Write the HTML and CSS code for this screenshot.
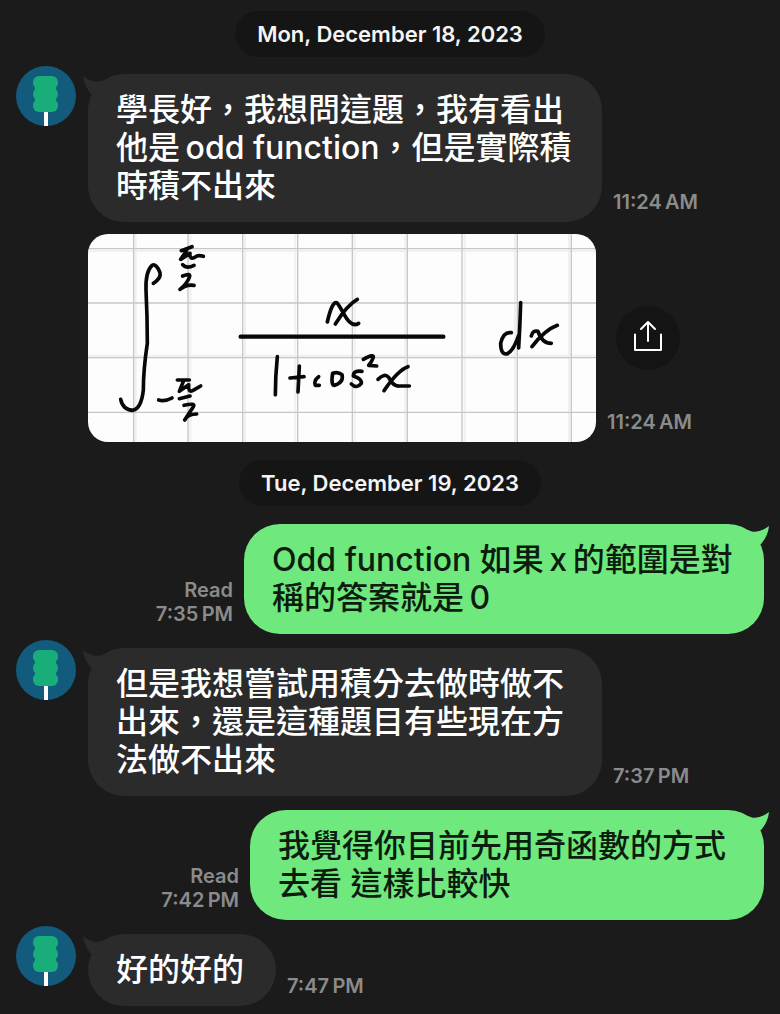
FILE: index.html
```html
<!DOCTYPE html>
<html lang="zh-Hant">
<head>
<meta charset="utf-8">
<meta name="viewport" content="width=device-width, initial-scale=1">
<title>Chat</title>
<link rel="stylesheet" href="styles.css">
</head>
<body>
<svg class="defs" aria-hidden="true">
  <symbol id="avatar" viewBox="0 0 60 60">
    <circle cx="30" cy="30" r="30" fill="#125b7d"/>
    <path d="M28 45h4v15h-4z" fill="#fff"/>
    <g fill="#18ad79">
      <rect x="17" y="10" width="25" height="13" rx="6"/>
      <rect x="17" y="21" width="25" height="14" rx="7"/>
      <rect x="17" y="33" width="25" height="13" rx="6"/>
      <rect x="19" y="15" width="21" height="26"/>
    </g>
  </symbol>
  <symbol id="tail-right" viewBox="0 0 30 30"><path d="M8 6L12 7.500Q20 9 29 2Q28 12 21 20L10 26Z"/></symbol>
  <symbol id="tail-left" viewBox="0 0 30 30"><path d="M22 6L18 7.500Q10 9 1 2Q2 12 9 20L20 26Z"/></symbol>
</svg>
<main class="chat">
  <time class="date" datetime="2023-12-18">Mon, December 18, 2023</time>

  <article class="row received">
    <svg class="avatar" role="img" aria-label="Profile"><use href="#avatar"/></svg>
    <div class="bubble"><svg class="tail" aria-hidden="true"><use href="#tail-left"/></svg>學長好，我想問這題，我有看出他是&#8201;odd function，但是實際積時積不出來</div>
    <div class="meta"><time>11:24&#8201;AM</time></div>
  </article>

  <article class="row photo-row">
    <svg class="photo" viewBox="0 12 1524 624" role="img" aria-label="Handwritten integral of x over 1 plus cos squared x">
      <path fill="#fdfdfd" d="M0 12h1524v624H0z"/>
      <path stroke="#f0f0f0" stroke-width="6" d="M143 12v624M307 12v624M471 12v624M622 12v624M800 12v624M952 12v624M1130 12v624M1281 12v624M1443 12v624M0 63h1524M0 377h1524"/>
      <path stroke="#c6c6c6" stroke-width="4" d="M137 12v624M300 12v624M464 12v624M629 12v624M793 12v624M958 12v624M1122 12v624M1288 12v624M1450 12v624M0 56h1524M0 219h1524M0 383h1524M0 547h1524"/>
      <g class="ink">
        <path d="M196 160Q220 145 216 128Q205 100 192 106Q172 125 174 180Q178 260 178 340Q166 420 166 480Q160 535 135 541Q105 540 98 508"/>
        <path d="M280 62L312 50M296 62L278 88L306 70Q304 90 320 82Q330 74 346 79M284 104Q296 118 318 106M284 138Q310 128 304 142Q296 162 276 178Q295 162 318 166"/>
        <path d="M212 510Q230 516 252 504M268 450L304 450M286 454L274 484L302 464Q300 488 314 482L338 468M274 506L306 498M288 526Q324 518 316 530L290 570Q300 552 326 552"/>
        <path d="M458 320H1066" stroke-width="13"/>
        <path d="M568 380Q562 440 562 494M606 444L648 440M634 408L630 486M692 440Q676 452 682 466L694 466M734 430Q728 466 740 466Q768 456 762 434Q750 424 734 430M822 424Q796 420 796 438Q822 446 820 460Q806 478 790 462"/>
        <path d="M826 388Q858 370 856 382Q850 398 842 406L866 408M870 448Q890 428 902 442Q916 470 934 468L964 468M960 410Q930 420 888 482"/>
        <path d="M718 276Q732 214 746 218C762 230 780 300 812 280M808 208Q778 224 742 282"/>
        <path d="M1270 308Q1246 304 1238 340Q1238 374 1256 372Q1276 364 1292 316M1298 218Q1296 290 1292 354M1330 318Q1334 300 1350 304Q1362 340 1390 340M1408 286Q1370 300 1332 350"/>
      </g>
    </svg>
    <div class="side">
      <button class="share" type="button" aria-label="Share">
        <svg viewBox="0 0 28 32" aria-hidden="true"><path d="M1 14.500V30H27V14.500M14 21V2M7 9L14 2L21 9"/></svg>
      </button>
      <time>11:24&#8201;AM</time>
    </div>
  </article>

  <time class="date second" datetime="2023-12-19">Tue, December 19, 2023</time>

  <article class="row sent">
    <div class="meta"><span>Read</span><time>7:35&#8201;PM</time></div>
    <div class="bubble wide"><svg class="tail" aria-hidden="true"><use href="#tail-right"/></svg>Odd function 如果&#8201;x&#8201;的範圍是對稱的答案就是&#8201;0</div>
  </article>

  <article class="row received">
    <svg class="avatar" role="img" aria-label="Profile"><use href="#avatar"/></svg>
    <div class="bubble"><svg class="tail" aria-hidden="true"><use href="#tail-left"/></svg>但是我想嘗試用積分去做時做不出來，還是這種題目有些現在方法做不出來</div>
    <div class="meta"><time>7:37&#8201;PM</time></div>
  </article>

  <article class="row sent after">
    <div class="meta"><span>Read</span><time>7:42&#8201;PM</time></div>
    <div class="bubble"><svg class="tail" aria-hidden="true"><use href="#tail-right"/></svg>我覺得你目前先用奇函數的方式去看 這樣比較快</div>
  </article>

  <article class="row received">
    <svg class="avatar" role="img" aria-label="Profile"><use href="#avatar"/></svg>
    <div class="bubble short"><svg class="tail" aria-hidden="true"><use href="#tail-left"/></svg>好的好的</div>
    <div class="meta"><time>7:47&#8201;PM</time></div>
  </article>
</main>
</body>
</html>
```

FILE: styles.css
```css
* { box-sizing: border-box; }
body {
  margin: 0;
  background: #1b1b1b;
  color: #fff;
  font-family: Inter, "Noto Sans CJK TC", sans-serif;
  font-weight: 500;
}
.defs { position: absolute; width: 0; height: 0; }
.chat {
  display: flex;
  flex-direction: column;
  padding: 11px 16px 8px;
}
.date {
  align-self: center;
  padding: 0 22px;
  border-radius: 23px;
  background: #151515;
  font-size: 22px;
  font-weight: 600;
  line-height: 46px;
  color: #f4f4f4;
}
.date.second { margin: 18px 0; }
.row { display: flex; align-items: flex-end; }
.received { margin-top: 6px; }
.date + .received { margin-top: 9px; }
.avatar {
  flex: none;
  align-self: flex-start;
  width: 60px;
  height: 60px;
  margin-right: 12px;
}
.bubble {
  position: relative;
  max-width: 514px;
  padding: 17px 30px 17px 28px;
  border-radius: 36px;
  font-size: 32px;
  line-height: 38px;
}
.bubble.wide { max-width: 520px; }
.bubble.short { padding-right: 32px; }
.received .bubble { margin-top: 8px; background: #2b2b2b; }
.sent .bubble { background: #6fe87d; color: #0c1c0e; }
.sent { justify-content: flex-end; }
.sent.after { margin-top: 14px; }
.tail { position: absolute; top: 0; width: 30px; height: 30px; }
.received .tail { left: -6px; fill: #2b2b2b; }
.sent .tail { right: -6px; fill: #6fe87d; }
.meta, .side {
  color: #8b8b8b;
  font-size: 20px;
  font-weight: 600;
  line-height: 24px;
  white-space: nowrap;
}
.meta {
  display: flex;
  flex-direction: column;
  flex: none;
  margin: 0 11px;
  padding-bottom: 8px;
}
.sent .meta { align-items: flex-end; }
.photo-row { margin: 12px 0 0 72px; align-items: stretch; }
.photo {
  width: 508px;
  min-width: 0;
  border-radius: 20px;
}
.ink {
  fill: none;
  stroke: #080808;
  stroke-width: 11;
  stroke-linecap: round;
  stroke-linejoin: round;
}
.side {
  display: grid;
  grid-template-rows: 1fr auto 1fr;
  padding-left: 11px;
}
.side time { align-self: end; grid-row: 3; padding-bottom: 8px; }
.share {
  display: grid;
  place-items: center;
  grid-row: 2;
  width: 64px;
  height: 64px;
  margin-left: 9px;
  padding: 0 0 4px;
  border: 0;
  border-radius: 50%;
  background: #141414;
}
.share svg {
  width: 28px;
  height: 32px;
  fill: none;
  stroke: #fff;
  stroke-width: 2;
  stroke-linejoin: round;
  stroke-linecap: round;
}
```
